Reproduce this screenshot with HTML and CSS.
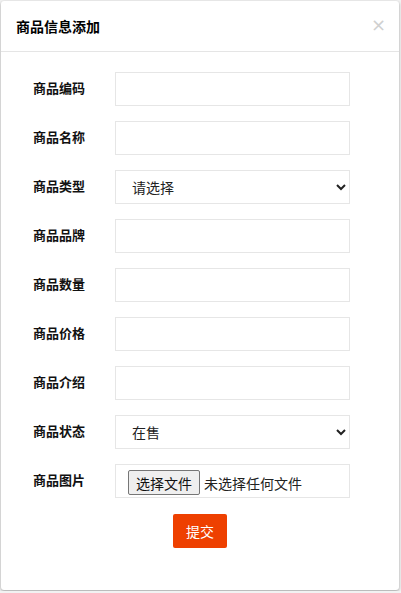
FILE: index.html
```html
<!DOCTYPE html>
<html lang="zh-CN">
<head>
<meta charset="utf-8">
<title>商品信息添加</title>
<link rel="stylesheet" href="styles.css">
</head>
<body>
<div class="modal">
  <div class="modal-header">
    <span class="modal-title">商品信息添加</span>
    <span class="close">&times;</span>
  </div>
  <form class="modal-body">
    <div class="row"><label class="label">商品编码</label><input class="field" type="text"></div>
    <div class="row"><label class="label">商品名称</label><input class="field" type="text"></div>
    <div class="row"><label class="label">商品类型</label>
      <select class="field select"><option>请选择</option></select></div>
    <div class="row"><label class="label">商品品牌</label><input class="field" type="text"></div>
    <div class="row"><label class="label">商品数量</label><input class="field" type="text"></div>
    <div class="row"><label class="label">商品价格</label><input class="field" type="text"></div>
    <div class="row"><label class="label">商品介绍</label><input class="field" type="text"></div>
    <div class="row"><label class="label">商品状态</label>
      <select class="field select"><option>在售</option></select></div>
    <div class="row"><label class="label">商品图片</label>
      <div class="field filebox"><span class="filebtn">选择文件</span><span class="filetext">未选择任何文件</span></div></div>
    <div class="actions"><button type="button" class="submit">提交</button></div>
  </form>
</div>
</body>
</html>
```

FILE: styles.css
```css
html, body {
  margin: 0;
  padding: 0;
  background: #f2f2f2;
  font-family: "Noto Sans CJK SC", "Noto Sans", sans-serif;
  color: #333;
}
.modal {
  margin: 1px;
  width: 398px;
  height: 589px;
  background: #fff;
  border-radius: 3px;
  box-shadow: 0 1px 3px rgba(0, 0, 0, 0.35);
  box-sizing: border-box;
}
.modal-header {
  height: 50px;
  border-bottom: 1px solid #e5e5e5;
  display: flex;
  align-items: center;
  justify-content: space-between;
  padding: 0 15px;
}
.modal-title {
  font-size: 14px;
  font-weight: bold;
  color: #000;
}
.close {
  font-size: 18px;
  color: #d0d0d0;
  font-family: "DejaVu Sans", sans-serif;
  line-height: 1;
  margin-right: -2px;
  margin-top: -2px;
}
.modal-body {
  padding: 20px 0 0 0;
  margin: 0;
  display: flex;
  flex-direction: column;
  gap: 15px;
}
.row {
  display: flex;
  align-items: center;
  height: 34px;
}
.label {
  width: 114px;
  padding-left: 32px;
  box-sizing: border-box;
  font-size: 13px;
  font-weight: bold;
  color: #111;
  margin-top: -4px;
}
.field {
  width: 235px;
  height: 34px;
  box-sizing: border-box;
  border: 1px solid #e6e6e6;
  border-radius: 0;
  background: #fff;
  outline: none;
  margin: 0;
  font-family: "Noto Sans CJK SC", "Noto Sans", sans-serif;
}
.select {
  padding-left: 12px;
  font-size: 14px;
  color: #222;
}
.filebox {
  display: flex;
  align-items: center;
  padding-left: 12px;
  font-size: 14px;
  color: #222;
}
.filebtn {
  display: inline-flex;
  align-items: center;
  justify-content: center;
  height: 25px;
  width: 72px;
  box-sizing: border-box;
  border: 1px solid #767676;
  border-radius: 2px;
  background: #efefef;
  font-size: 14px;
  color: #111;
  margin-top: 3px;
}
.filetext {
  margin-left: 4px;
  margin-top: 3px;
}
.actions {
  display: flex;
  justify-content: center;
  margin-top: 1px;
}
.submit {
  width: 54px;
  height: 34px;
  border: none;
  border-radius: 2px;
  background: #ee4000;
  color: #fff;
  font-size: 14px;
  font-family: "Noto Sans CJK SC", "Noto Sans", sans-serif;
  padding: 0;
}
```
